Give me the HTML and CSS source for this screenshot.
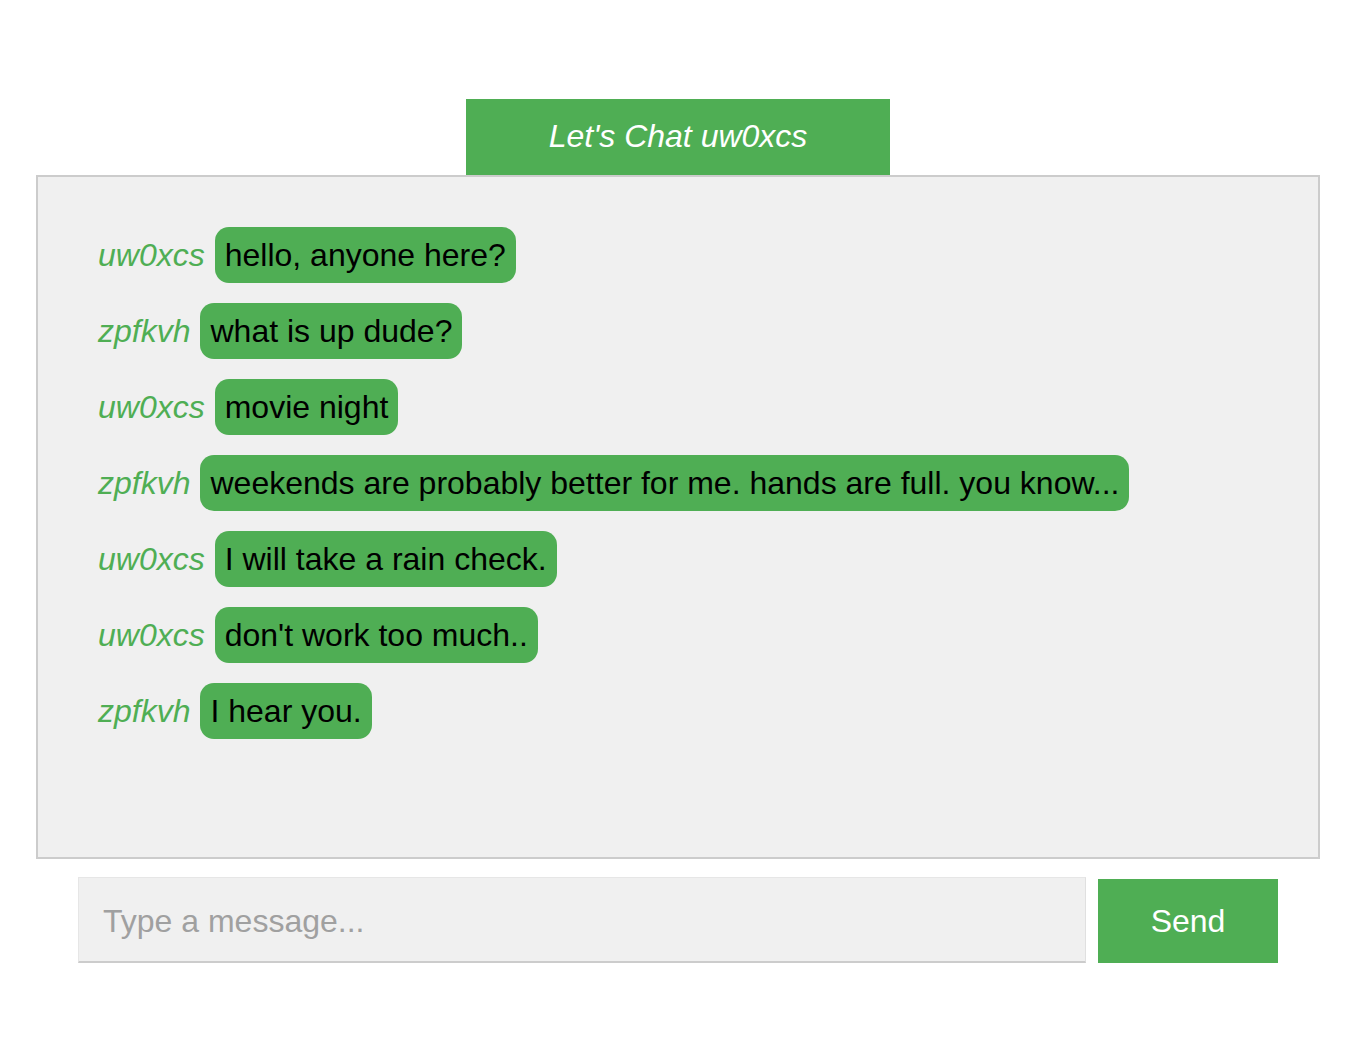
FILE: index.html
```html
<!DOCTYPE html>
<html>
<head>
<meta charset="utf-8">
<link rel="stylesheet" href="styles.css">
</head>
<body>
<div class="page">
  <div class="header">Let's Chat uw0xcs</div>
  <div class="chat">
    <div class="msg"><span class="name">uw0xcs</span><span class="bubble">hello, anyone here?</span></div>
    <div class="msg"><span class="name">zpfkvh</span><span class="bubble">what is up dude?</span></div>
    <div class="msg"><span class="name">uw0xcs</span><span class="bubble">movie night</span></div>
    <div class="msg"><span class="name">zpfkvh</span><span class="bubble">weekends are probably better for me. hands are full. you know...</span></div>
    <div class="msg"><span class="name">uw0xcs</span><span class="bubble">I will take a rain check.</span></div>
    <div class="msg"><span class="name">uw0xcs</span><span class="bubble">don't work too much..</span></div>
    <div class="msg"><span class="name">zpfkvh</span><span class="bubble">I hear you.</span></div>
  </div>
  <div class="compose">
    <input class="input" type="text" placeholder="Type a message...">
    <button class="send">Send</button>
  </div>
</div>
</body>
</html>
```
FILE: styles.css
```css
html, body {
  margin: 0;
  padding: 0;
  background: #fff;
  font-family: "Liberation Sans", Arial, sans-serif;
}
.page {
  width: 1284px;
  margin-left: 36px;
  padding-top: 99px;
  display: flex;
  flex-direction: column;
  align-items: center;
}
.header {
  width: 424px;
  height: 76px;
  background: #4fae54;
  color: #fff;
  font-style: italic;
  font-size: 32px;
  display: flex;
  align-items: center;
  justify-content: center;
  box-sizing: border-box;
  padding-bottom: 2px;
}
.chat {
  width: 1284px;
  height: 684px;
  box-sizing: border-box;
  border: 2px solid #cccccc;
  background: #f0f0f0;
  padding: 50px 60px;
  display: flex;
  flex-direction: column;
  gap: 20px;
}
.msg {
  display: flex;
  align-items: center;
  gap: 10px;
  font-size: 32px;
}
.name {
  color: #4fae54;
  font-style: italic;
}
.bubble {
  background: #4fae54;
  color: #000;
  border-radius: 14px;
  padding: 10px 10px;
  line-height: 36px;
}
.compose {
  margin-top: 18px;
  display: flex;
  gap: 12px;
  align-items: flex-end;
}
.input {
  width: 1008px;
  height: 86px;
  box-sizing: border-box;
  border: none;
  border-top: 1px solid #e6e6e6;
  border-left: 1px solid #e6e6e6;
  border-bottom: 2px solid #cccccc;
  border-right: 1px solid #e0e0e0;
  background: #f0f0f0;
  font-family: "Liberation Sans", Arial, sans-serif;
  font-size: 32px;
  padding: 4px 24px 0;
  color: #333;
  outline: none;
}
.input::placeholder {
  color: #a0a0a0;
}
.send {
  width: 180px;
  height: 84px;
  border: none;
  background: #4fae54;
  color: #fff;
  font-family: "Liberation Sans", Arial, sans-serif;
  font-size: 32px;
  padding: 0;
}
```
